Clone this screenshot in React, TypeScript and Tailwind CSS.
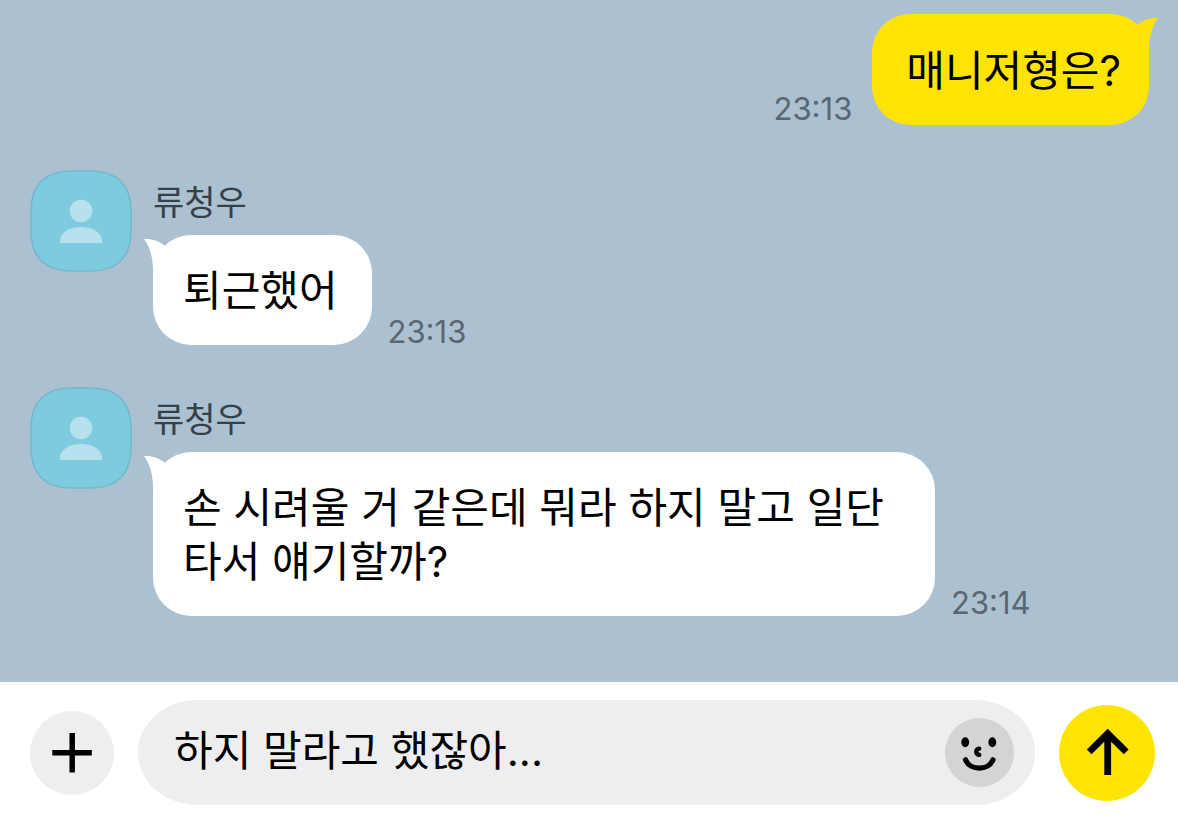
import React, { useState } from 'react';

interface Message {
  id: number;
  sender: string | null;
  text: string;
  time: string;
}

const messages: Message[] = [
  { id: 1, sender: null, text: '매니저형은?', time: '23:13' },
  { id: 2, sender: '류청우', text: '퇴근했어', time: '23:13' },
  {
    id: 3,
    sender: '류청우',
    text: '손 시려울 거 같은데 뭐라 하지 말고 일단 타서 얘기할까?',
    time: '23:14'
  }
];

const Avatar: React.FC = () => (
  <svg className="w-[102px] h-[102px] shrink-0" viewBox="0 0 102 102" aria-hidden="true">
    <path
      d="M41 1H61C87 1 101 15 101 41V61C101 87 87 101 61 101H41C15 101 1 87 1 61V41C1 15 15 1 41 1Z"
      fill="#7ecbe0"
      stroke="#75b8ca"
      strokeWidth="1.6"
    />
    <circle cx="51" cy="41" r="11.2" fill="#b7e1ec" />
    <path d="M30 73V71C30 63 39 57 51 57S72 63 72 71V73Z" fill="#b7e1ec" />
  </svg>
);

const Tail: React.FC<{ mine?: boolean }> = ({ mine }) => (
  <svg
    className={
      mine
        ? 'absolute top-0 -right-[9px] w-6 h-9 -scale-x-100 text-[#fee404]'
        : 'absolute top-0 -left-[9px] w-6 h-9 text-white'
    }
    viewBox="0 0 24 36"
    aria-hidden="true"
  >
    <path d="M0 4C8 3.600 15 5.500 21.200 11.200L24 36H9C9 23 6 12 0 4Z" fill="currentColor" />
  </svg>
);

const Time: React.FC<{ value: string }> = ({ value }) => (
  <time className="text-[31px] leading-[26px] text-[#5a6670]">{value}</time>
);

const MyMessage: React.FC<{ message: Message }> = ({ message }) => (
  <li className="mb-[3px] flex items-end justify-end gap-5">
    <div className="flex pb-[3px]">
      <Time value={message.time} />
    </div>
    <div className="relative rounded-[38px] bg-[#fee404] pl-[34px] pr-7 pt-[30px] pb-[27px]">
      <Tail mine />
      <p className="relative text-[42px] leading-[54px] text-black">{message.text}</p>
    </div>
  </li>
);

const TheirMessage: React.FC<{ message: Message }> = ({ message }) => (
  <li className="flex items-start gap-[21px]">
    <Avatar />
    <div className="min-w-0">
      <p className="text-[34px] leading-[65px] text-[#34414b]">{message.sender}</p>
      <div className="flex items-end gap-4">
        <div className="relative max-w-[782px] rounded-[38px] bg-white pl-[30px] pr-[34px] pt-[29px] pb-[27px]">
          <Tail />
          <p className="relative text-[42px] leading-[54px] break-keep text-black">{message.text}</p>
        </div>
        <Time value={message.time} />
      </div>
    </div>
  </li>
);

const Composer: React.FC = () => {
  const [draft, setDraft] = useState('하지 말라고 했잖아...');

  return (
    <form
      className="flex items-center gap-6 bg-white pl-[30px] pr-[23px] pt-[18px] pb-[9px]"
      onSubmit={(e) => e.preventDefault()}
    >
      <button type="button" aria-label="추가" className="w-[84px] h-[84px] shrink-0 rounded-full bg-[#eeeef0]">
        <svg viewBox="0 0 84 84" fill="none" stroke="#000" strokeWidth="5.500">
          <path d="M22.300 41.800H61.800M42.200 22V61.500" />
        </svg>
      </button>

      <div className="flex min-w-0 flex-1 items-center rounded-[60px_/_52px] bg-[#eeeef0] h-[105px] pl-9 pr-[21px]">
        <input
          type="text"
          aria-label="메시지 입력"
          value={draft}
          onChange={(e) => setDraft(e.target.value)}
          className="min-w-0 flex-1 bg-transparent pb-1 text-[42px] leading-[54px] text-black outline-none"
        />
        <button type="button" aria-label="이모티콘" className="w-[69px] h-[69px] shrink-0 rounded-full bg-[#d5d3d4]">
          <svg viewBox="0 0 69 69" fill="none" stroke="#000" strokeLinecap="round">
            <ellipse cx="20.200" cy="24.300" rx="3.900" ry="5" fill="#000" stroke="none" />
            <ellipse cx="47.300" cy="24.300" rx="3.900" ry="5" fill="#000" stroke="none" />
            <path d="M34.200 30.600C30.400 31.200 30.400 36.200 34.200 36.800" strokeWidth="4.400" />
            <path d="M20.500 41.800C25 53 43.500 53 48 41.800" strokeWidth="5.200" />
          </svg>
        </button>
      </div>

      <button type="submit" aria-label="전송" className="w-24 h-24 shrink-0 rounded-full bg-[#fee404]">
        <svg viewBox="0 0 96 96" fill="none" stroke="#000" strokeWidth="6.800">
          <path d="M30.200 46.800L48.700 28.600L67.200 46.800M48.700 29V70" />
        </svg>
      </button>
    </form>
  );
};

const App: React.FC = () => {
  return (
    <div className="flex min-h-screen flex-col bg-white font-['Inter','Noto_Sans_CJK_KR',sans-serif]">
      <main className="bg-[#abc0d1] pl-[30px] pr-[29px] pt-[14px] pb-[66px]">
        <ul className="flex flex-col gap-[42px]">
          {messages.map((message) =>
            message.sender ? (
              <TheirMessage key={message.id} message={message} />
            ) : (
              <MyMessage key={message.id} message={message} />
            )
          )}
        </ul>
      </main>
      <Composer />
    </div>
  );
};

export default App;
